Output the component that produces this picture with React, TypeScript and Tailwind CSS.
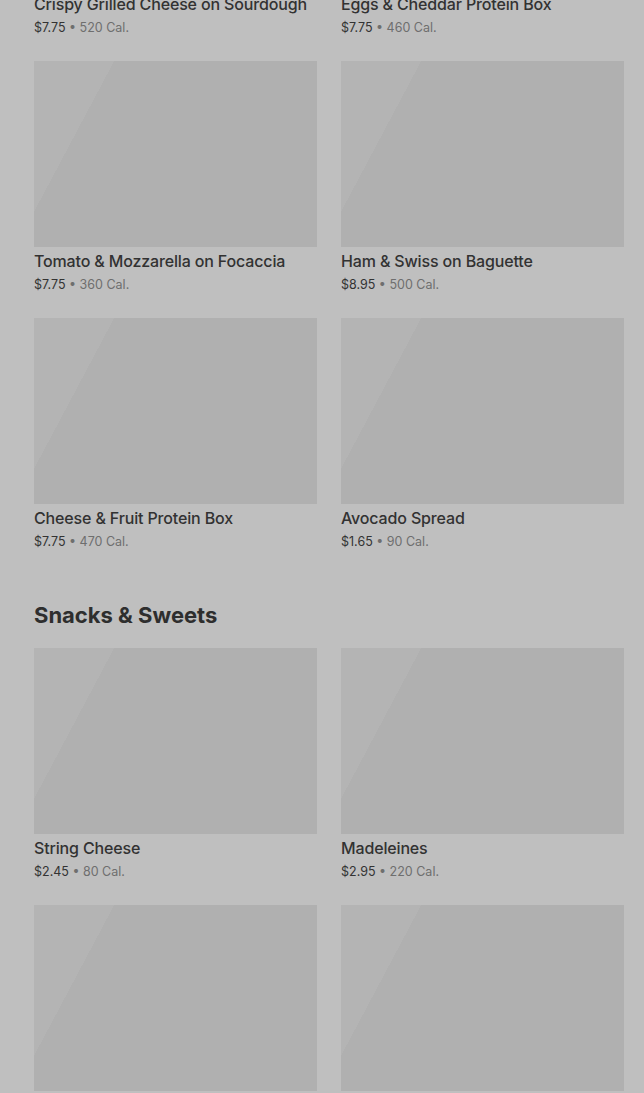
import React from 'react';

type Item = { name: string; price: string; cal: string };

const sections: { title?: string; items: Item[] }[] = [
  {
    items: [
      { name: 'Crispy Grilled Cheese on Sourdough', price: '$7.75', cal: '520 Cal.' },
      { name: 'Eggs & Cheddar Protein Box', price: '$7.75', cal: '460 Cal.' },
      { name: 'Tomato & Mozzarella on Focaccia', price: '$7.75', cal: '360 Cal.' },
      { name: 'Ham & Swiss on Baguette', price: '$8.95', cal: '500 Cal.' },
      { name: 'Cheese & Fruit Protein Box', price: '$7.75', cal: '470 Cal.' },
      { name: 'Avocado Spread', price: '$1.65', cal: '90 Cal.' },
    ],
  },
  {
    title: 'Snacks & Sweets',
    items: [
      { name: 'String Cheese', price: '$2.45', cal: '80 Cal.' },
      { name: 'Madeleines', price: '$2.95', cal: '220 Cal.' },
      { name: 'Shortbread Cookie', price: '$2.45', cal: '180 Cal.' },
      { name: 'Salted Pretzels', price: '$2.45', cal: '160 Cal.' },
    ],
  },
];

function MenuCard({ item }: { item: Item }) {
  return (
    <div className="flex flex-col">
      <div className="h-[186px] w-full bg-[linear-gradient(118deg,#b4b4b4_21%,#b0b0b0_21%)]" />
      <p className="mt-0.5 text-[16px] leading-6 font-medium tracking-[-0.15px] text-[#323232] truncate">
        {item.name}
      </p>
      <p className="mt-0.5 text-[12.5px] leading-5 text-[#333333]">
        {item.price} <span className="text-[#6e6e6e]">• {item.cal}</span>
      </p>
    </div>
  );
}

export default function App() {
  return (
    <div
      className="min-h-[1093px] bg-[#bfbfbf] overflow-hidden"
      style={{ fontFamily: 'Inter, "Noto Sans", sans-serif' }}
    >
      <div className="-mt-[196px] pl-[34px] pr-5 flex flex-col">
        {sections.map((s, i) => (
          <section key={i} className={i > 0 ? 'mt-[49px]' : ''}>
            {s.title && (
              <h2 className="mb-[19px] text-[22px] leading-7 font-bold text-[#2e2e2e]">
                {s.title}
              </h2>
            )}
            <div className="grid grid-cols-2 gap-x-6 gap-y-[23px]">
              {s.items.map((it) => (
                <MenuCard key={it.name} item={it} />
              ))}
            </div>
          </section>
        ))}
      </div>
    </div>
  );
}
